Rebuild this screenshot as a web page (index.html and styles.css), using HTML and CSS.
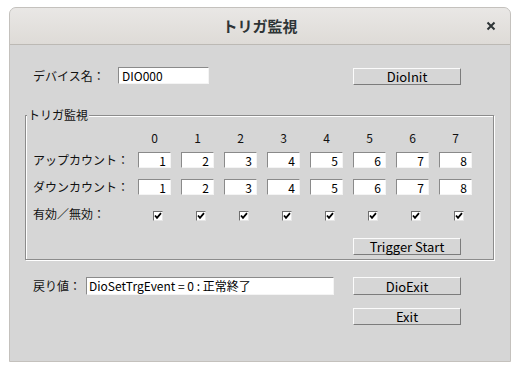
FILE: index.html
```html
<!DOCTYPE html>
<html lang="ja">
<head>
<meta charset="utf-8">
<title>トリガ監視</title>
<link rel="stylesheet" href="styles.css">
</head>
<body>
<div class="window">
  <div class="titlebar">
    <span></span>
    <span class="title">トリガ監視</span>
    <span class="close"><svg width="10" height="10" viewBox="0 0 10 10"><path d="M1.5 1.5 L8.5 8.5 M8.5 1.5 L1.5 8.5" stroke="#2e3436" stroke-width="2" fill="none"/></svg></span>
  </div>
  <div class="content">
    <div class="device-row">
      <span class="label device-label">デバイス名：</span>
      <span class="field device-field">DIO000</span>
      <span class="button init-btn">DioInit</span>
    </div>
    <div class="group">
      <span class="group-caption">トリガ監視</span>
      <div class="grid">
        <span></span>
        <span class="head">0</span><span class="head">1</span><span class="head">2</span><span class="head">3</span>
        <span class="head">4</span><span class="head">5</span><span class="head">6</span><span class="head">7</span>

        <span class="label">アップカウント：</span>
        <span class="field num">1</span><span class="field num">2</span><span class="field num">3</span><span class="field num">4</span>
        <span class="field num">5</span><span class="field num">6</span><span class="field num">7</span><span class="field num">8</span>

        <span class="label">ダウンカウント：</span>
        <span class="field num">1</span><span class="field num">2</span><span class="field num">3</span><span class="field num">4</span>
        <span class="field num">5</span><span class="field num">6</span><span class="field num">7</span><span class="field num">8</span>

        <span class="label">有効／無効：</span>
        <span class="check"><svg width="8" height="8" viewBox="0 0 8 8"><path d="M1 3.5 L3 5.8 L7 1.2" stroke="#000" stroke-width="1.8" fill="none"/></svg></span>
        <span class="check"><svg width="8" height="8" viewBox="0 0 8 8"><path d="M1 3.5 L3 5.8 L7 1.2" stroke="#000" stroke-width="1.8" fill="none"/></svg></span>
        <span class="check"><svg width="8" height="8" viewBox="0 0 8 8"><path d="M1 3.5 L3 5.8 L7 1.2" stroke="#000" stroke-width="1.8" fill="none"/></svg></span>
        <span class="check"><svg width="8" height="8" viewBox="0 0 8 8"><path d="M1 3.5 L3 5.8 L7 1.2" stroke="#000" stroke-width="1.8" fill="none"/></svg></span>
        <span class="check"><svg width="8" height="8" viewBox="0 0 8 8"><path d="M1 3.5 L3 5.8 L7 1.2" stroke="#000" stroke-width="1.8" fill="none"/></svg></span>
        <span class="check"><svg width="8" height="8" viewBox="0 0 8 8"><path d="M1 3.5 L3 5.8 L7 1.2" stroke="#000" stroke-width="1.8" fill="none"/></svg></span>
        <span class="check"><svg width="8" height="8" viewBox="0 0 8 8"><path d="M1 3.5 L3 5.8 L7 1.2" stroke="#000" stroke-width="1.8" fill="none"/></svg></span>
        <span class="check"><svg width="8" height="8" viewBox="0 0 8 8"><path d="M1 3.5 L3 5.8 L7 1.2" stroke="#000" stroke-width="1.8" fill="none"/></svg></span>

        <span class="button trigger-btn">Trigger Start</span>
      </div>
    </div>
    <div class="bottom">
      <span class="label">戻り値：</span>
      <span class="field result-field">DioSetTrgEvent = 0 : 正常終了</span>
      <span class="button exit1">DioExit</span>
      <span class="button exit2">Exit</span>
    </div>
  </div>
</div>
</body>
</html>
```

FILE: styles.css
```css
* { box-sizing: border-box; }

body {
  margin: 0;
  background: #ffffff;
  font-family: "Noto Sans CJK JP", "Noto Sans", sans-serif;
  font-size: 12px;
  color: #111;
}

.window {
  margin: 7px 0 0 9px;
  width: 502px;
  height: 355px;
  border: 1px solid #c4c1bd;
  border-radius: 7px 7px 0 0;
  overflow: hidden;
  background: #d6d6d6;
  display: flex;
  flex-direction: column;
}

.titlebar {
  height: 37px;
  flex: none;
  display: grid;
  grid-template-columns: 1fr auto 1fr;
  align-items: center;
  background: linear-gradient(#e9e7e5, #dedbd7);
  border-bottom: 1px solid #bcb9b4;
}

.title {
  font-size: 15px;
  font-weight: bold;
  color: #2e3436;
  line-height: 20px;
}

.close {
  justify-self: end;
  margin-right: 14px;
  display: flex;
}

.content {
  padding: 22px 0 0 15px;
}

.label {
  line-height: 16px;
  white-space: nowrap;
  color: #111;
}

.field {
  background: #fff;
  border-top: 1px solid #8a8a8a;
  border-left: 1px solid #8a8a8a;
  border-right: 1px solid #f4f4f4;
  border-bottom: 1px solid #f4f4f4;
  line-height: 15px;
  color: #000;
  white-space: nowrap;
}

.button {
  display: flex;
  align-items: center;
  justify-content: center;
  width: 108px;
  height: 17px;
  border-top: 1px solid #fbfbfb;
  border-left: 1px solid #fbfbfb;
  border-right: 1px solid #7c7c7c;
  border-bottom: 1px solid #7c7c7c;
  color: #000;
  font-size: 13px;
  line-height: 15px;
}

.device-row {
  display: flex;
  align-items: flex-start;
  padding-left: 8px;
  height: 18px;
}

.device-label {
  width: 85px;
  margin-top: 1px;
}

.device-field {
  width: 91px;
  height: 17px;
  padding-left: 3px;
}

.init-btn {
  margin-left: 144px;
  margin-top: 1px;
}

.group {
  position: relative;
  margin-top: 30px;
  width: 469px;
  height: 145px;
  border: 1px solid #8c8c8c;
  box-shadow: 1px 1px 0 #fff, inset 1px 1px 0 #fff;
  padding: 14px 0 0 7px;
}

.group-caption {
  position: absolute;
  top: -9px;
  left: 1px;
  padding: 0 1px;
  line-height: 16px;
  background: #d6d6d6;
  color: #111;
}

.grid {
  display: grid;
  grid-template-columns: 95px repeat(8, 33px);
  grid-template-rows: 22px 27px 27px 32px auto;
  column-gap: 10px;
  align-items: start;
}

.head {
  text-align: center;
  line-height: 16px;
  color: #111;
}

.num {
  height: 16px;
  text-align: right;
  padding-right: 4px;
}

.check {
  margin: 5px 0 0 15px;
  width: 10px;
  height: 10px;
  background: #fff;
  border-top: 1px solid #6e6e6e;
  border-left: 1px solid #6e6e6e;
  border-right: 1px solid #e6e6e6;
  border-bottom: 1px solid #e6e6e6;
  display: flex;
  align-items: center;
  justify-content: center;
}

.trigger-btn {
  grid-column: 7 / span 3;
  justify-self: start;
}

.bottom {
  margin-top: 17px;
  padding-left: 8px;
  display: grid;
  grid-template-columns: 53px 248px 19px 108px;
  grid-template-rows: 18px 17px;
  row-gap: 13px;
  align-items: center;
}

.result-field {
  height: 18px;
  padding-left: 2px;
  line-height: 16px;
}

.exit1 {
  grid-column: 3 / span 2;
  justify-self: end;
  height: 18px;
}

.exit2 {
  grid-column: 4;
  grid-row: 2;
}
```
